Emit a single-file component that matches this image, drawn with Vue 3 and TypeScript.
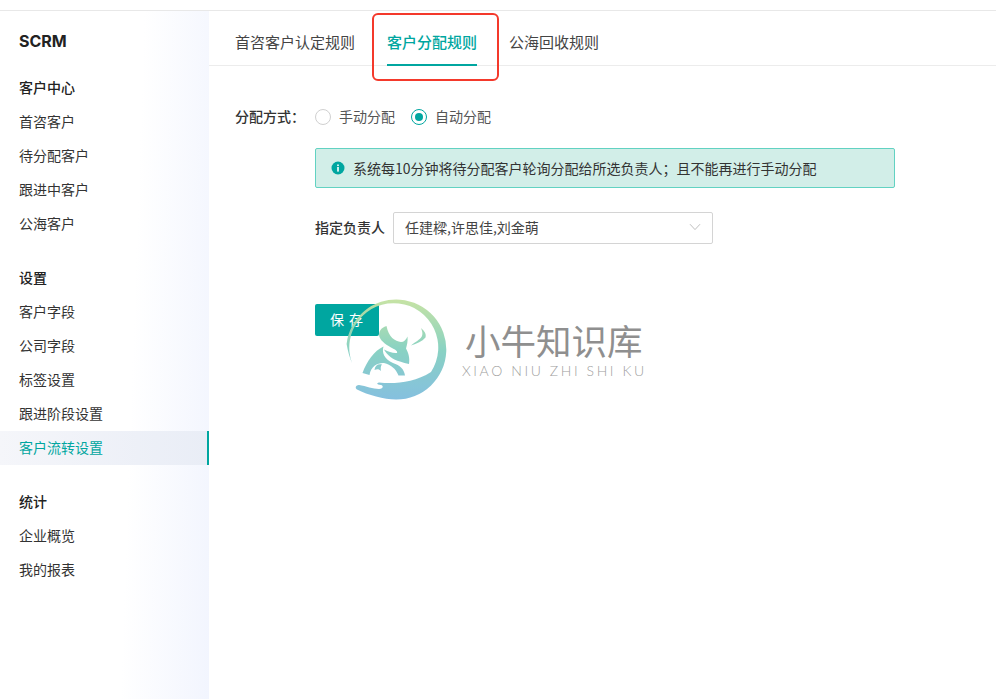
<script setup lang="ts">
interface Group { title: string; items: string[] }
const groups: Group[] = [
  { title: '客户中心', items: ['首咨客户', '待分配客户', '跟进中客户', '公海客户'] },
  { title: '设置', items: ['客户字段', '公司字段', '标签设置', '跟进阶段设置', '客户流转设置'] },
  { title: '统计', items: ['企业概览', '我的报表'] },
]
const activeItem = '客户流转设置'
const tabs = ['首咨客户认定规则', '客户分配规则', '公海回收规则']
const activeTab = '客户分配规则'
</script>

<template>
  <div class="page">
    <div class="topbar"></div>
    <div class="body">
      <aside class="sidebar">
        <div class="brand">SCRM</div>
        <section v-for="g in groups" :key="g.title" class="group">
          <div class="group-title">{{ g.title }}</div>
          <div
            v-for="item in g.items"
            :key="item"
            class="nav-item"
            :class="{ active: item === activeItem }"
          >{{ item }}</div>
        </section>
      </aside>
      <main class="main">
        <nav class="tabs">
          <div
            v-for="t in tabs"
            :key="t"
            class="tab"
            :class="{ active: t === activeTab }"
          >{{ t }}</div>
        </nav>
        <div class="content">
          <div class="radio-row">
            <span class="label">分配方式：</span>
            <label class="radio"><i class="dot"></i><span>手动分配</span></label>
            <label class="radio checked"><i class="dot"></i><span>自动分配</span></label>
          </div>
          <div class="indent">
            <div class="alert">
              <svg class="info" viewBox="0 0 14 14" width="14" height="14">
                <circle cx="7" cy="7" r="6.5" fill="#00a6a0" />
                <rect x="6.2" y="6" width="1.6" height="4.6" fill="#fff" />
                <rect x="6.2" y="3.5" width="1.6" height="1.6" fill="#fff" />
              </svg>
              <span>系统每10分钟将待分配客户轮询分配给所选负责人；且不能再进行手动分配</span>
            </div>
            <div class="owner-row">
              <span class="owner-label">指定负责人</span>
              <div class="select">
                <span>任建樑,许思佳,刘金萌</span>
                <svg viewBox="0 0 12 8" width="12" height="8">
                  <path d="M1 1.2 6 6.6 11 1.2" fill="none" stroke="#bfbfbf" stroke-width="1" />
                </svg>
              </div>
            </div>
            <button class="save" type="button">保 存</button>
          </div>
        </div>
      </main>
    </div>

    <div class="highlight"></div>

    <div class="watermark">
      <svg class="wm-logo" viewBox="0 0 101 102" width="101" height="102">
        <defs>
          <linearGradient id="wmg" gradientUnits="userSpaceOnUse" x1="0" y1="0" x2="0" y2="102">
            <stop offset="0" stop-color="#c4e2a0" />
            <stop offset="0.5" stop-color="#83d0c0" />
            <stop offset="1" stop-color="#7fbcdf" />
          </linearGradient>
        </defs>
        <path fill="url(#wmg)" d="M6 64Q2.500 56 0.600 45A50 50 0 1 1 50 100.500C38 100.500 22 96 11 90.500C8.500 89 10 86 13 86C20 87 27 90 33 90C37 90 38 87 35 86C31 85.500 30 84 33 83.500C48 85 68 84 85 73A44.500 44.500 0 1 0 6 64Z" />
        <path fill="url(#wmg)" d="M40.500 27C35 28.500 32 33 33.500 38C35.500 43 41 46 45 48.500C49 50.500 52 52 51 54C47 54.500 43 53 38 50.500C41 56 47 61 54 62.500C57 63.500 60 64.500 63 65C64 59 62.500 54 60 49.500C61 46 62 42 61.500 37.500C60 41 58 43 55 43C49 42.500 42.500 38 40.500 27Z" />
        <path fill="url(#wmg)" d="M75 29C78.500 32 80.500 35 79.500 38.500C76 42.500 71 44.500 65 46.500C69 43 74 41 76 37C77 34 76 32 75 29Z" />
        <path fill="url(#wmg)" d="M16.500 74C21 62 28 52 37.500 47.500C35.500 54 38.500 60 47 64C54 66.500 58 70 59 76.500L52.500 76.500C50 70 45 65.500 38 64C32 63.500 25 67 23.500 76Z" />
        <path fill="url(#wmg)" d="M28.500 71C29 66.500 32 64.500 36 65.500C34.500 67 34.500 70 35 72C33 70 31 70 28.500 71Z" />
      </svg>
      <div class="wm-text">
        <div class="wm-cn">小牛知识库</div>
        <div class="wm-en">XIAO NIU ZHI SHI KU</div>
      </div>
    </div>
  </div>
</template>

<style>
html, body { margin: 0; background: #fff; }
</style>

<style scoped>
.page {
  position: relative;
  width: 996px;
  height: 699px;
  overflow: hidden;
  font-family: "Noto Sans CJK SC", "Noto Sans", sans-serif;
  font-size: 14px;
  color: #333;
  background: #fff;
}
.topbar { height: 10px; border-bottom: 1px solid #e8e8e8; }
.body { display: flex; height: 688px; }
.sidebar {
  width: 209px;
  flex: none;
  background: linear-gradient(92deg, #fff 62%, #f2f5fe 100%);
}
.brand {
  padding: 20px 19px 0;
  height: 40px;
  font: 700 16px/20px Inter, "Noto Sans", sans-serif;
  color: #222;
}
.group { margin-bottom: 20px; }
.group-title, .nav-item { height: 34px; line-height: 32px; padding-left: 19px; }
.group-title { font-weight: 500; color: #222; }
.nav-item.active {
  color: #00a6a0;
  background: linear-gradient(90deg, #f5f6fa, #e9edf6);
  border-right: 2px solid #00a6a0;
}
.main { flex: 1; min-width: 0; }
.tabs {
  display: flex;
  gap: 32px;
  height: 54px;
  padding-left: 26px;
  border-bottom: 1px solid #ececec;
}
.tab { font-size: 15px; line-height: 61px; height: 55px; color: #444; box-sizing: border-box; }
.tab.active { color: #00a6a0; border-bottom: 2px solid #00a6a0; font-weight: 500; }
.content { padding: 41px 0 0 26px; }
.radio-row { display: flex; align-items: center; height: 20px; line-height: 18px; }
.label, .radio span { margin-top: -2px; }
.label { width: 80px; font-weight: 500; color: #333; }
.radio { display: flex; align-items: center; gap: 8px; margin-right: 16px; color: #555; }
.dot {
  width: 16px;
  height: 16px;
  box-sizing: border-box;
  border: 1px solid #d0d0d0;
  border-radius: 50%;
  display: block;
  position: relative;
}
.checked .dot { border-color: #00a6a0; }
.checked .dot::after {
  content: "";
  position: absolute;
  left: 3px;
  top: 3px;
  width: 8px;
  height: 8px;
  border-radius: 50%;
  background: #00a6a0;
}
.indent { padding-left: 80px; }
.alert {
  display: flex;
  align-items: center;
  gap: 8px;
  width: 580px;
  height: 40px;
  margin-top: 21px;
  padding-left: 15px;
  box-sizing: border-box;
  background: #d2eee8;
  border: 1px solid #62d2c2;
  border-radius: 2px;
  color: #333;
  line-height: 18px;
}
.info { flex: none; }
.owner-row { display: flex; align-items: center; gap: 8px; margin-top: 24px; line-height: 18px; }
.owner-label { font-weight: 500; padding-bottom: 2px; }
.select {
  display: flex;
  align-items: center;
  justify-content: space-between;
  width: 320px;
  height: 32px;
  box-sizing: border-box;
  padding: 0 11px 2px 11px;
  border: 1px solid #d4d4d4;
  border-radius: 2px;
  color: #444;
}
.save {
  display: block;
  width: 64px;
  height: 32px;
  margin-top: 60px;
  padding: 0 0 2px;
  border: 0;
  border-radius: 2px;
  background: #00a6a0;
  color: #fff;
  font: 14px "Noto Sans CJK SC", sans-serif;
  letter-spacing: 1px;
}
.highlight {
  position: absolute;
  left: 372px;
  top: 13px;
  width: 127px;
  height: 68px;
  box-sizing: border-box;
  border: 2.500px solid #f4392b;
  border-radius: 6px;
}
.watermark {
  position: absolute;
  left: 346px;
  top: 299px;
  display: flex;
  pointer-events: none;
}
.wm-logo { flex: none; opacity: .95; }
.wm-text { margin-left: 18px; padding-top: 19px; }
.wm-cn {
  font-size: 35.500px;
  line-height: 44px;
  height: 44px;
  width: 190px;
  color: #8f8f8f;
  font-weight: 400;
}
.wm-en {
  margin-left: -3px;
  margin-top: 1px;
  height: 16px;
  font: 300 14px/16px Lato, sans-serif;
  letter-spacing: 2.600px;
  color: #a0a0a0;
  white-space: nowrap;
}
</style>
